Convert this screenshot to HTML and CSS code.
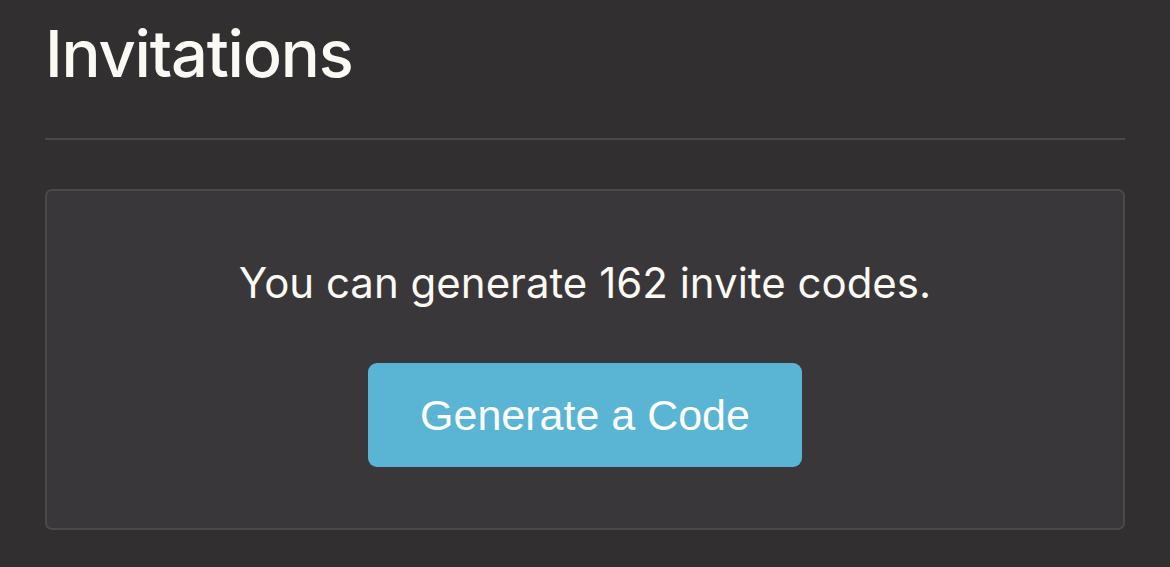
FILE: index.html
```html
<!DOCTYPE html>
<html>
<head>
<meta charset="utf-8">
<link rel="stylesheet" href="styles.css">
</head>
<body>
<div class="page">
  <h1 class="title">Invitations</h1>
  <hr class="divider">
  <div class="card">
    <p class="info">You can generate 162 invite codes.</p>
    <button class="btn">Generate a Code</button>
  </div>
</div>
</body>
</html>
```
FILE: styles.css
```css
html, body {
  margin: 0;
  padding: 0;
  background: #312f30;
}
body {
  font-family: Inter, "Noto Sans", sans-serif;
  color: #fbf9f4;
}
.page {
  padding: 0 45px;
}
.title {
  margin: 0;
  padding-top: 14px;
  font-size: 65px;
  font-weight: 500;
  line-height: 80px;
  letter-spacing: -1.2px;
}
.divider {
  margin: 44px 0 0 0;
  border: none;
  height: 2px;
  background: #4a4849;
}
.card {
  margin-top: 49px;
  height: 341px;
  box-sizing: border-box;
  border: 2px solid #4b494a;
  border-radius: 7px;
  background: #3a373a;
  display: flex;
  flex-direction: column;
  align-items: center;
  padding-top: 52px;
}
.info {
  margin: 0;
  font-size: 42px;
  line-height: 80px;
}
.btn {
  margin-top: 40px;
  width: 434px;
  height: 104px;
  border: none;
  border-radius: 9px;
  background: #5ab4d3;
  color: #ffffff;
  font-family: "Liberation Sans", Arial, sans-serif;
  font-size: 43px;
  padding: 0;
}
```
